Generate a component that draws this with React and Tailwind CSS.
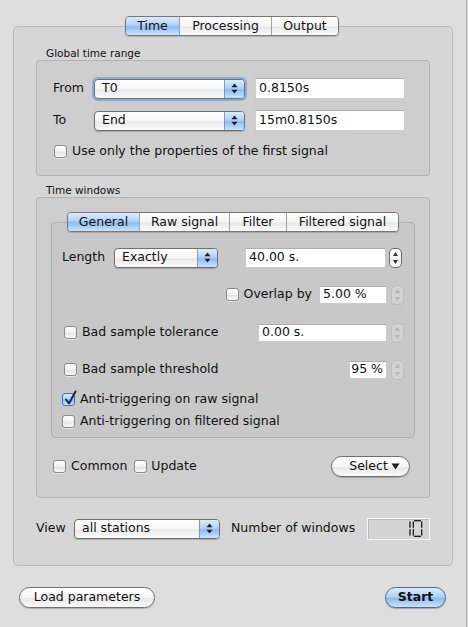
import React from 'react';

// Aqua-like gradients
const blue = 'bg-[linear-gradient(#dcebfb,#b0d2f6_45%,#8cbdf1_55%,#c8e4fd)]';
const white = 'bg-[linear-gradient(#ffffff,#f5f5f5_50%,#e8e8e8_55%,#fafafa)]';

function Arrows({ color = '#1f1f1f' }) {
  return (
    <svg width="7" height="11" viewBox="0 0 7 11">
      <path d="M3.5 0.5 L6.5 4.2 L0.5 4.2 Z" fill={color} />
      <path d="M3.5 10.5 L6.5 6.8 L0.5 6.8 Z" fill={color} />
    </svg>
  );
}

function Checkbox({ checked }) {
  if (checked) {
    return (
      <div className={`relative w-[13px] h-[13px] shrink-0 rounded-[3px] border border-[#4f6f9c] ${blue}`}>
        <svg className="absolute -top-[4px] left-[1px]" width="13" height="16" viewBox="0 0 13 16">
          <path d="M2 9.5 L5 13.5 L11.5 1.5" stroke="#1c2a44" strokeWidth="2" fill="none" strokeLinecap="round" strokeLinejoin="round" />
        </svg>
      </div>
    );
  }
  return (
    <div className="w-[13px] h-[13px] shrink-0 rounded-[3px] border border-[#8a8a8a] bg-[linear-gradient(#ffffff,#f0f0f0_50%,#e4e4e4_55%,#fafafa)] shadow-[0_1px_0_rgba(255,255,255,0.5)]" />
  );
}

function Popup({ className, label, focused }) {
  return (
    <div
      className={`${className} flex h-[20px] rounded-[4px] border border-[#6f6f6f] overflow-hidden ${white} ${
        focused ? 'shadow-[0_0_0_2px_rgba(110,160,230,0.75)] border-[#5c7fb6]' : 'shadow-[0_1px_1px_rgba(0,0,0,0.2)]'
      }`}
    >
      <div className="flex-1 flex items-center pl-[7px] whitespace-nowrap">{label}</div>
      <div className={`w-[20px] flex items-center justify-center border-l border-[#7f9bc4] ${blue}`}>
        <Arrows />
      </div>
    </div>
  );
}

function Field({ className, children, right }) {
  return (
    <div
      className={`${className} flex items-center whitespace-nowrap bg-white border border-[#cbcbcb] border-t-[#adadad] px-[3px] ${
        right ? 'justify-end' : ''
      }`}
    >
      {children}
    </div>
  );
}

function Stepper({ disabled }) {
  const c = disabled ? '#b4b4b4' : '#333';
  return (
    <div
      className={`w-[13px] h-[20px] shrink-0 rounded-[5px] border flex flex-col items-center justify-between py-[3px] ${
        disabled ? 'border-[#bdbdbd] bg-[#d2d2d2]' : `border-[#6c6c6c] ${white}`
      }`}
    >
      <svg width="5" height="4" viewBox="0 0 5 4">
        <path d="M2.5 0 L5 4 L0 4 Z" fill={c} />
      </svg>
      <svg width="5" height="4" viewBox="0 0 5 4">
        <path d="M2.5 4 L5 0 L0 0 Z" fill={c} />
      </svg>
    </div>
  );
}

function Segmented({ items, active }) {
  return (
    <div className="flex h-[20px] rounded-[4px] border border-[#777] overflow-hidden shadow-[0_1px_1px_rgba(0,0,0,0.18)]">
      {items.map((it, i) => (
        <div
          key={it.label}
          className={`${it.w} flex items-center justify-center whitespace-nowrap ${i ? 'border-l border-[#a2a2a2]' : ''} ${
            it.label === active ? blue : white
          }`}
        >
          {it.label}
        </div>
      ))}
    </div>
  );
}

function Lcd() {
  // seven segment "10"
  return (
    <svg width="14" height="17" viewBox="0 0 14 17">
      <g stroke="#1a1a1a" strokeWidth="1.3" fill="none">
        <path d="M1 1.5 V7.8" />
        <path d="M1 9.2 V15.5" />
        <path d="M5 0.7 H12" />
        <path d="M5 16.3 H12" />
        <path d="M4.3 1.5 V7.8" />
        <path d="M4.3 9.2 V15.5" />
        <path d="M12.7 1.5 V7.8" />
        <path d="M12.7 9.2 V15.5" />
      </g>
    </svg>
  );
}

const mainTabs = [
  { label: 'Time', w: 'w-[53px]' },
  { label: 'Processing', w: 'w-[92px]' },
  { label: 'Output', w: 'w-[67px]' },
];

const subTabs = [
  { label: 'General', w: 'w-[71px]' },
  { label: 'Raw signal', w: 'w-[90px]' },
  { label: 'Filter', w: 'w-[57px]' },
  { label: 'Filtered signal', w: 'w-[112px]' },
];

export default function App() {
  return (
    <div className="flex w-[468px] h-[627px] bg-[#dedede] text-[12.5px] text-[#111] font-['DejaVu_Sans',sans-serif] overflow-hidden">
      <div className="w-[466px] pt-[16px] pl-[13px] pr-[13px]">
        {/* Main tabs */}
        <div className="relative z-10 h-[20px] flex pl-[112px]">
          <Segmented items={mainTabs} active="Time" />
        </div>

        <div className="-mt-[10px] h-[540px] rounded-[5px] border border-[#bababa] bg-[#d6d6d6] px-[22px] pt-[20px]">
          {/* Global time range */}
          <div className="h-[13px] leading-[13px] text-[10.5px] pl-[10px]">Global time range</div>
          <div className="h-[116px] rounded-[4px] border border-[#b3b3b3] bg-[#cecece] px-[16px] pt-[17px]">
            <div className="flex items-center h-[21px]">
              <div className="w-[41px]">From</div>
              <Popup className="w-[151px]" label="T0" focused />
              <Field className="ml-[10px] w-[150px] h-[21px]">0.8150s</Field>
            </div>
            <div className="flex items-center h-[21px] mt-[11px]">
              <div className="w-[41px]">To</div>
              <Popup className="w-[151px]" label="End" />
              <Field className="ml-[10px] w-[150px] h-[21px]">15m0.8150s</Field>
            </div>
            <div className="flex items-center h-[13px] mt-[14px] pl-[1px]">
              <Checkbox />
              <span className="ml-[5px]">Use only the properties of the first signal</span>
            </div>
          </div>

          {/* Time windows */}
          <div className="mt-[8px] h-[13px] leading-[13px] text-[10.5px] pl-[10px]">Time windows</div>
          <div className="h-[301px] rounded-[4px] border border-[#b3b3b3] bg-[#cecece] px-[14px] pt-[14px]">
            <div className="relative z-10 h-[20px] flex pl-[16px]">
              <Segmented items={subTabs} active="General" />
            </div>
            <div className="-mt-[10px] h-[216px] rounded-[4px] border border-[#adadad] bg-[#c8c8c8] px-[10px] pt-[24px]">
              <div className="flex items-center h-[21px]">
                <div className="w-[52px]">Length</div>
                <Popup className="w-[104px]" label="Exactly" />
                <Field className="ml-[27px] w-[141px] h-[20px]">40.00 s.</Field>
                <div className="ml-[3px]">
                  <Stepper />
                </div>
              </div>

              <div className="flex items-center justify-end h-[19px] mt-[17px]">
                <Checkbox />
                <span className="ml-[5px]">Overlap by</span>
                <Field className="ml-[7px] w-[68px] h-[18px]">5.00 %</Field>
                <div className="ml-[4px]">
                  <Stepper disabled />
                </div>
              </div>

              <div className="flex items-center h-[19px] mt-[19px] pl-[2px]">
                <Checkbox />
                <span className="ml-[5px]">Bad sample tolerance</span>
                <Field className="ml-auto w-[129px] h-[18px]">0.00 s.</Field>
                <div className="ml-[4px]">
                  <Stepper disabled />
                </div>
              </div>

              <div className="flex items-center h-[19px] mt-[18px] pl-[2px]">
                <Checkbox />
                <span className="ml-[5px]">Bad sample threshold</span>
                <Field className="ml-auto w-[38px] h-[18px]" right>
                  95 %
                </Field>
                <div className="ml-[4px]">
                  <Stepper disabled />
                </div>
              </div>

              <div className="flex items-center h-[13px] mt-[14px]">
                <Checkbox checked />
                <span className="ml-[5px]">Anti-triggering on raw signal</span>
              </div>
              <div className="flex items-center h-[13px] mt-[9px]">
                <Checkbox />
                <span className="ml-[5px]">Anti-triggering on filtered signal</span>
              </div>
            </div>

            <div className="flex items-center h-[21px] mt-[18px] pl-[2px] pr-[5px]">
              <Checkbox />
              <span className="ml-[5px]">Common</span>
              <div className="ml-[7px]">
                <Checkbox />
              </div>
              <span className="ml-[4px]">Update</span>
              <div className={`ml-auto w-[79px] h-[21px] rounded-full border border-[#707070] flex items-center justify-center gap-[3px] pl-[8px] ${white} shadow-[0_1px_1px_rgba(0,0,0,0.2)]`}>
                <span>Select</span>
                <svg width="9" height="7" viewBox="0 0 9 7">
                  <path d="M0.5 0.5 H8.5 L4.5 6.5 Z" fill="#1f1f1f" />
                </svg>
              </div>
            </div>
          </div>

          {/* View row */}
          <div className="flex items-center h-[23px] mt-[19px]">
            <div className="w-[38px]">View</div>
            <Popup className="w-[146px]" label="all stations" />
            <div className="ml-[11px]">Number of windows</div>
            <div className="ml-auto w-[63px] h-[22px] border border-[#f8f8f8] bg-[#d4d4d4] shadow-[inset_1px_1px_0_#b9b9b9] flex items-center justify-end pr-[6px]">
              <Lcd />
            </div>
          </div>
        </div>

        {/* Bottom buttons */}
        <div className="flex items-center h-[21px] mt-[21px] pl-[6px] pr-[7px]">
          <div className={`w-[136px] h-[21px] rounded-full border border-[#707070] flex items-center justify-center ${white} shadow-[0_1px_1px_rgba(0,0,0,0.2)]`}>
            Load parameters
          </div>
          <div className={`ml-auto w-[61px] h-[21px] rounded-full border border-[#4a6a9a] flex items-center justify-center font-bold ${blue} shadow-[0_1px_1px_rgba(0,0,0,0.25)]`}>
            Start
          </div>
        </div>
      </div>
      <div className="w-px bg-[#b3b3b3]" />
      <div className="w-px bg-[#cdcdcd]" />
    </div>
  );
}
